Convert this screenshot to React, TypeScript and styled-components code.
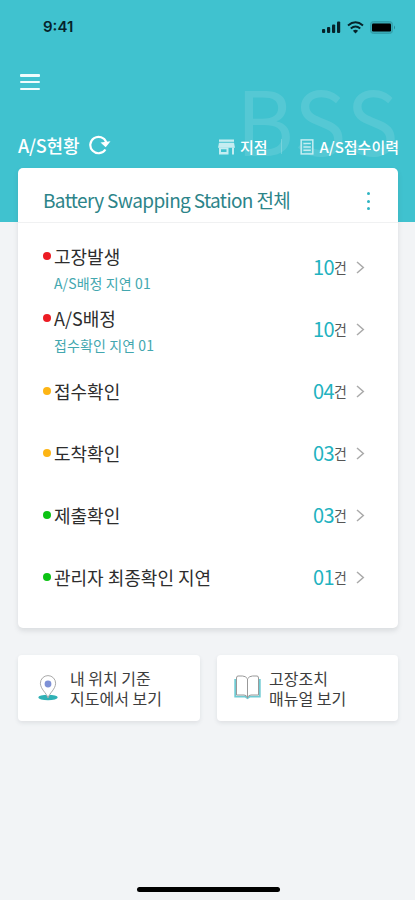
import React from "react";
import styled, { createGlobalStyle } from "styled-components";

const GlobalStyle = createGlobalStyle`
  * { box-sizing: border-box; }
  body {
    margin: 0;
    background: #f2f4f6;
    font-family: "Noto Sans CJK KR", "Noto Sans", sans-serif;
  }
`;

const Screen = styled.div`
  width: 415px;
  height: 900px;
  display: flex;
  flex-direction: column;
  overflow: hidden;
  background: linear-gradient(#40c2cf 0 222px, #f2f4f6 222px);
`;

const StatusBar = styled.div`
  height: 54px;
  padding: 0 19px 0 43px;
  display: flex;
  align-items: center;
  justify-content: space-between;
`;

const Clock = styled.span`
  font: 600 15px/20px Inter, sans-serif;
  color: #06232a;
`;

const StatusIcons = styled.div`
  display: flex;
  align-items: center;
  gap: 6px;
`;

const Header = styled.header`
  position: relative;
  height: 114px;
  padding: 20px 16px 0 18px;
  color: #fff;
`;

const Watermark = styled.div`
  position: absolute;
  left: 236px;
  top: 19px;
  font-size: 88px;
  line-height: 90px;
  letter-spacing: 1.2px;
  white-space: nowrap;
  color: rgba(255, 255, 255, 0.11);
`;

const MenuButton = styled.div`
  position: relative;
  width: 24px;
  height: 16px;
  padding: 0 2px;
  display: flex;
  flex-direction: column;
  justify-content: space-between;
`;

const MenuLine = styled.span`
  height: 2.5px;
  border-radius: 1px;
  background: #effcfd;
`;

const TitleRow = styled.div`
  position: relative;
  margin-top: 41px;
  height: 28px;
  display: flex;
  align-items: center;
  justify-content: space-between;
`;

const PageTitle = styled.h1`
  margin: 0;
  display: flex;
  align-items: center;
  gap: 9px;
  font-size: 18px;
  line-height: 28px;
  font-weight: 500;
  letter-spacing: -0.2px;
`;

const Links = styled.nav`
  display: flex;
  align-items: center;
  gap: 14px;
  padding-top: 3px;
`;

const HeaderLink = styled.span`
  display: flex;
  align-items: center;
  gap: 5px;
  font-size: 15px;
  line-height: 28px;
  font-weight: 500;
  letter-spacing: 0;
`;

const Divider = styled.span`
  width: 1px;
  height: 15px;
  margin-right: 4px;
  background: rgba(255, 255, 255, 0.2);
`;

const Card = styled.section`
  margin: 0 17px 0 18px;
  height: 460px;
  flex: none;
  position: relative;
  background: #fff;
  border-radius: 5px;
  box-shadow: 0 3px 5px rgba(60, 70, 80, 0.13);
`;

const CardHeader = styled.div`
  height: 55px;
  padding: 9px 25px 0;
  display: flex;
  align-items: flex-start;
  justify-content: space-between;
  border-bottom: 1px solid #f0f1f2;
`;

const CardTitle = styled.h2`
  margin: 0;
  font-size: 19px;
  line-height: 45px;
  font-weight: 400;
  letter-spacing: -0.63px;
  color: #2c8489;
`;

const MoreButton = styled.div`
  height: 48px;
  width: 9px;
  display: flex;
  flex-direction: column;
  align-items: center;
  justify-content: center;
  gap: 4.6px;
`;

const MoreDot = styled.span`
  width: 3px;
  height: 3px;
  border-radius: 50%;
  background: #2fb4c2;
`;

const List = styled.ul`
  margin: 0;
  padding: 13px 33px 0 25px;
  list-style: none;
`;

const Row = styled.li`
  height: 62px;
  display: flex;
  align-items: center;
  justify-content: space-between;
`;

const RowText = styled.div<{ $hasNote: boolean }>`
  padding-top: ${(p) => (p.$hasNote ? 4 : 0)}px;
`;

const RowTitle = styled.div`
  display: flex;
  align-items: center;
  gap: 3px;
  font-size: 18px;
  line-height: 28px;
  color: #2d2d2d;
`;

const Dot = styled.span<{ $color: string }>`
  width: 8px;
  height: 8px;
  border-radius: 50%;
  background: ${(p) => p.$color};
`;

const Note = styled.div`
  padding-left: 11px;
  font-size: 14px;
  line-height: 27px;
  letter-spacing: 0.1px;
  color: #43a7af;
`;

const Count = styled.div`
  display: flex;
  align-items: center;
  line-height: 28px;
`;

const CountNumber = styled.span`
  font-size: 20px;
  letter-spacing: -0.5px;
  color: #22b2c0;
`;

const CountUnit = styled.span`
  margin: 0 9px 0 0;
  font-size: 14px;
  color: #555;
`;

const Shortcuts = styled.div`
  margin: 27px 17px 0 18px;
  display: grid;
  grid-template-columns: 182px 181px;
  gap: 17px;
`;

const Shortcut = styled.div<{ $gap: number; $inset: number }>`
  height: 66px;
  padding: 0 0 1px ${(p) => p.$inset}px;
  display: flex;
  align-items: center;
  gap: ${(p) => p.$gap}px;
  background: #fff;
  border-radius: 4px;
  box-shadow: 0 2px 4px rgba(60, 70, 80, 0.11);
  font-size: 16px;
  line-height: 20px;
  letter-spacing: 0;
  color: #3d3d3d;
`;

const ShortcutLine = styled.span`
  display: block;
`;

const HomeIndicator = styled.div`
  width: 143px;
  height: 5px;
  margin: auto auto 8px 137px;
  border-radius: 3px;
  background: #000;
`;

const Signal = () => (
  <svg width="19" height="12" viewBox="0 0 19 12" fill="#06232a">
    <rect x="0" y="8" width="3.2" height="4" rx="1" />
    <rect x="5" y="6" width="3.2" height="6" rx="1" />
    <rect x="10" y="3.5" width="3.2" height="8.5" rx="1" />
    <rect x="15" y="0.5" width="3.2" height="11.5" rx="1" />
  </svg>
);

const Wifi = () => (
  <svg width="17" height="13" viewBox="0 0 17 13" fill="none" stroke="#06232a" strokeWidth="2">
    <path d="M1 4.4Q8.5-2 16 4.4M3.8 7.5Q8.5 3.5 13.2 7.5" />
    <path d="M5.9 9.7Q8.5 7.7 11.1 9.7L8.5 12.5Z" fill="#06232a" stroke="none" />
  </svg>
);

const Battery = () => (
  <svg width="26" height="13" viewBox="0 0 26 13">
    <rect x="0.5" y="0.5" width="22" height="12" rx="3" fill="#38aab6" stroke="#31a0ac" />
    <rect x="2" y="2.4" width="19" height="8.2" rx="1.3" fill="#000" />
    <path d="M24 4.5Q26 6.5 24 8.5Z" fill="#248a96" />
  </svg>
);

const Refresh = () => (
  <svg width="24" height="20" viewBox="0 0 24 20">
    <path d="M17.4 14.5A8.2 8.2 0 1 1 18.2 7.2" fill="none" stroke="#fff" strokeWidth="2.2" />
    <path d="M12.5 7.5L22.5 6.3L17.7 12.2Z" fill="#fff" />
  </svg>
);

const Store = () => (
  <svg width="17" height="16" viewBox="0 0 17 16" fill="#c5edf1">
    <rect x="1" y="0.5" width="15" height="2.3" />
    <path d="M1 3.8H16L17 8.8H0Z" />
    <path d="M1 8.5H10.5V15.5H1ZM3 10.2V13H8.5V10.2Z" fillRule="evenodd" />
    <rect x="14" y="8.5" width="2" height="7" />
  </svg>
);

const Receipt = () => (
  <svg width="14" height="16" viewBox="0 0 14 16" fill="none" stroke="#c5edf1" strokeWidth="1.5">
    <rect x="1.2" y="0.9" width="11.6" height="14" />
    <path d="M3.4 4.5H10.8M3.4 7.9H10.8M3.4 11.3H10.8" />
  </svg>
);

const Chevron = () => (
  <svg width="9" height="13" viewBox="0 0 9 13" fill="none" stroke="#aaa" strokeWidth="1.5">
    <path d="M1 1L7.3 6.5L1 12" />
  </svg>
);

const MapPin = () => (
  <svg width="20" height="26" viewBox="0 0 20 26">
    <ellipse cx="10" cy="22.5" rx="9.7" ry="2.7" fill="#2fb1b5" />
    <path
      d="M10 22.8C8.4 18 2.4 14 2.4 8.2A7.6 7.6 0 0 1 17.6 8.2C17.6 14 11.6 18 10 22.8Z"
      fill="#fff"
      stroke="#aaa"
      strokeWidth="1"
    />
    <circle cx="10" cy="9" r="3.4" fill="#7e91d6" />
  </svg>
);

const Book = () => (
  <svg width="27" height="26" viewBox="0 0 27 26" fill="none">
    <path d="M1.2 4V21.7H11.5L13.5 23.2L15.5 21.7H25.8V4" stroke="#6fcbd3" strokeWidth="1.8" />
    <path
      d="M13.5 3.8Q11.5 1 8.5 1H4Q2.5 1 2.5 3V20H10Q12.5 20 13.5 22.5Q14.5 20 17 20H24.5V3Q24.5 1 23 1H18.5Q15.5 1 13.5 3.8Z"
      fill="#fff"
      stroke="#999"
    />
    <path d="M13.5 4V23.2" stroke="#999" />
  </svg>
);

const RED = "#ec1c24";
const AMBER = "#fdb515";
const GREEN = "#0cc314";

const rows = [
  { title: "고장발생", note: "A/S배정 지연 01", count: "10", color: RED },
  { title: "A/S배정", note: "접수확인 지연 01", count: "10", color: RED },
  { title: "접수확인", count: "04", color: AMBER },
  { title: "도착확인", count: "03", color: AMBER },
  { title: "제출확인", count: "03", color: GREEN },
  { title: "관리자 최종확인 지연", count: "01", color: GREEN },
];

export default function App() {
  return (
    <>
      <GlobalStyle />
      <Screen>
        <StatusBar>
          <Clock>9:41</Clock>
          <StatusIcons>
            <Signal />
            <Wifi />
            <Battery />
          </StatusIcons>
        </StatusBar>
        <Header>
          <Watermark>BSS</Watermark>
          <MenuButton>
            <MenuLine />
            <MenuLine />
            <MenuLine />
          </MenuButton>
          <TitleRow>
            <PageTitle>
              A/S현황
              <Refresh />
            </PageTitle>
            <Links>
              <HeaderLink>
                <Store />
                지점
              </HeaderLink>
              <Divider />
              <HeaderLink>
                <Receipt />
                A/S접수이력
              </HeaderLink>
            </Links>
          </TitleRow>
        </Header>
        <Card>
          <CardHeader>
            <CardTitle>Battery Swapping Station 전체</CardTitle>
            <MoreButton>
              <MoreDot />
              <MoreDot />
              <MoreDot />
            </MoreButton>
          </CardHeader>
          <List>
            {rows.map((row) => (
              <Row key={row.title}>
                <RowText $hasNote={Boolean(row.note)}>
                  <RowTitle>
                    <Dot $color={row.color} />
                    {row.title}
                  </RowTitle>
                  {row.note && <Note>{row.note}</Note>}
                </RowText>
                <Count>
                  <CountNumber>{row.count}</CountNumber>
                  <CountUnit>건</CountUnit>
                  <Chevron />
                </Count>
              </Row>
            ))}
          </List>
        </Card>
        <Shortcuts>
          <Shortcut $inset={20} $gap={12}>
            <MapPin />
            <div>
              <ShortcutLine>내 위치 기준</ShortcutLine>
              <ShortcutLine>지도에서 보기</ShortcutLine>
            </div>
          </Shortcut>
          <Shortcut $inset={17} $gap={8}>
            <Book />
            <div>
              <ShortcutLine>고장조치</ShortcutLine>
              <ShortcutLine>매뉴얼 보기</ShortcutLine>
            </div>
          </Shortcut>
        </Shortcuts>
        <HomeIndicator />
      </Screen>
    </>
  );
}
